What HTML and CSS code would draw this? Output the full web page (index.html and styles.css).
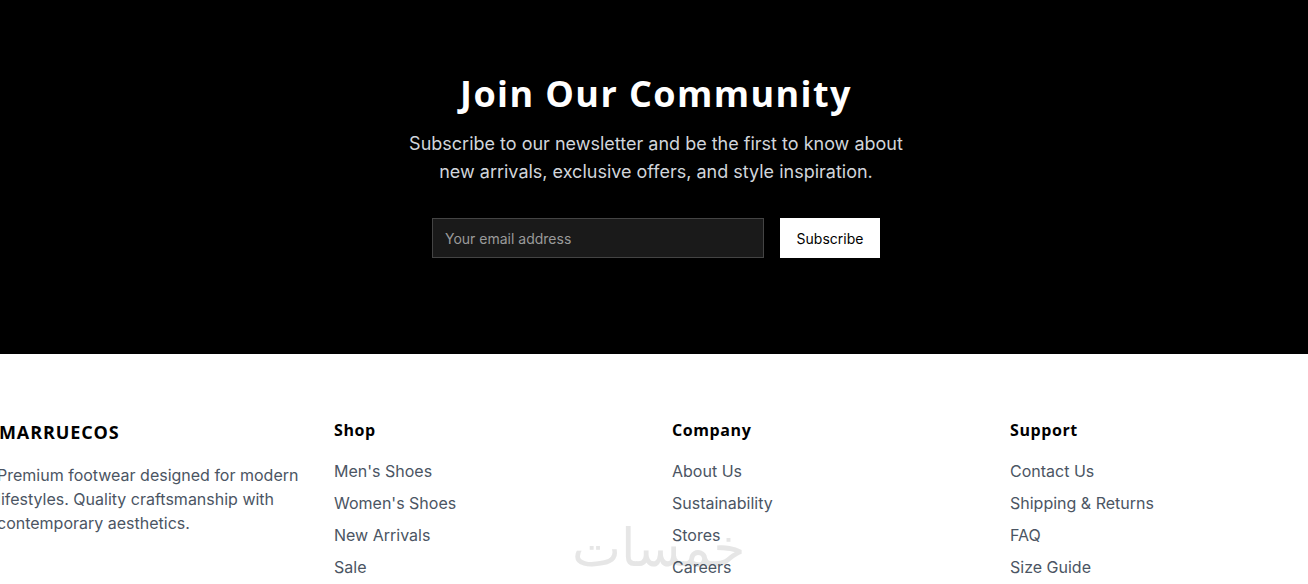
FILE: index.html
```html
<!DOCTYPE html>
<html lang="en">
<head>
<meta charset="utf-8">
<title>Marruecos</title>
<link rel="stylesheet" href="styles.css">
</head>
<body>
<section class="newsletter">
  <h2 class="newsletter-title">Join Our Community</h2>
  <p class="newsletter-text">Subscribe to our newsletter and be the first to know about<br>new arrivals, exclusive offers, and style inspiration.</p>
  <form class="newsletter-form">
    <input class="email-input" type="email" placeholder="Your email address">
    <button class="subscribe-btn" type="button">Subscribe</button>
  </form>
</section>
<footer class="footer">
  <div class="watermark" dir="rtl">خمسات</div>
  <div class="footer-grid">
    <div class="footer-brand">
      <div class="brand-name">MARRUECOS</div>
      <p class="brand-text">Premium footwear designed for modern lifestyles. Quality craftsmanship with contemporary aesthetics.</p>
    </div>
    <div class="footer-col">
      <h3 class="col-title">Shop</h3>
      <ul class="col-links">
        <li>Men's Shoes</li>
        <li>Women's Shoes</li>
        <li>New Arrivals</li>
        <li>Sale</li>
      </ul>
    </div>
    <div class="footer-col">
      <h3 class="col-title">Company</h3>
      <ul class="col-links">
        <li>About Us</li>
        <li>Sustainability</li>
        <li>Stores</li>
        <li>Careers</li>
      </ul>
    </div>
    <div class="footer-col">
      <h3 class="col-title">Support</h3>
      <ul class="col-links">
        <li>Contact Us</li>
        <li>Shipping &amp; Returns</li>
        <li>FAQ</li>
        <li>Size Guide</li>
      </ul>
    </div>
  </div>
</footer>
</body>
</html>
```

FILE: styles.css
```css
html, body {
  margin: 0;
  padding: 0;
  background: #ffffff;
}
body {
  font-family: Inter, "Liberation Sans", sans-serif;
  overflow: hidden;
  height: 584px;
}
.newsletter {
  background: #000;
  height: 354px;
  box-sizing: border-box;
  padding-top: 72px;
  padding-left: 4px;
  display: flex;
  flex-direction: column;
  align-items: center;
}
.newsletter-title {
  margin: 0;
  color: #fff;
  font-family: "Open Sans", sans-serif;
  font-weight: 700;
  font-size: 36px;
  line-height: 44px;
  letter-spacing: 1.4px;
}
.newsletter-text {
  margin: 14px 0 0;
  color: #d1d5db;
  font-size: 18px;
  line-height: 28px;
  text-align: center;
}
.newsletter-form {
  margin-top: 32px;
  display: flex;
  gap: 16px;
}
.email-input {
  width: 332px;
  height: 40px;
  box-sizing: border-box;
  background: #1a1a1a;
  border: 1px solid #444;
  padding: 0 12px;
  color: #fff;
  font-family: Inter, sans-serif;
  font-size: 14px;
  outline: none;
}
.email-input::placeholder {
  color: #9a9a9a;
}
.subscribe-btn {
  width: 100px;
  height: 40px;
  background: #fff;
  border: none;
  color: #000;
  font-family: Inter, sans-serif;
  font-size: 14px;
  padding: 0;
}
.footer {
  position: relative;
  padding-top: 64px;
}
.footer-grid {
  position: relative;
  display: grid;
  grid-template-columns: 301px 302px 302px 1fr;
  column-gap: 36px;
  margin-left: -3px;
}
.brand-name {
  font-family: "Open Sans", sans-serif;
  font-weight: 700;
  font-size: 18px;
  line-height: 28px;
  letter-spacing: 0.9px;
  padding-left: 2px;
  color: #000;
}
.brand-text {
  margin: 17px 0 0;
  width: 312px;
  color: #4b5563;
  font-size: 16px;
  line-height: 24px;
}
.col-title {
  margin: 0;
  font-family: "Open Sans", sans-serif;
  font-weight: 700;
  font-size: 16px;
  line-height: 24px;
  letter-spacing: 0.6px;
  color: #000;
}
.col-links {
  list-style: none;
  margin: 17px 0 0;
  padding: 0;
  display: flex;
  flex-direction: column;
  gap: 8px;
}
.col-links li {
  color: #4b5563;
  font-size: 16px;
  line-height: 24px;
}
.watermark {
  position: absolute;
  left: 572px;
  top: 164px;
  font-family: "DejaVu Sans", sans-serif;
  font-size: 52px;
  line-height: 60px;
  color: #e6e6e6;
  pointer-events: none;
}
```
